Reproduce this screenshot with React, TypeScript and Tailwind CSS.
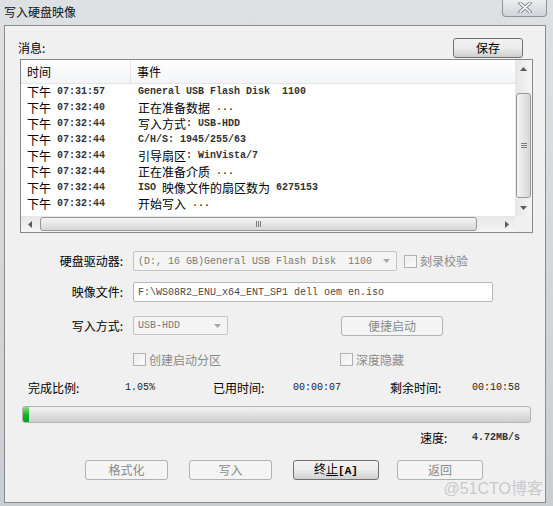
import React from "react"

const isCjk = (ch: string) => /[\u3000-\u9fff\uff00-\uffef]/.test(ch)

// split text into CJK / latin runs so each gets its own font and size
const splitRuns = (s: string) => {
  const out: { cjk: boolean; text: string }[] = []
  for (const ch of s) {
    const c = isCjk(ch)
    const last = out[out.length - 1]
    if (last && last.cjk === c) last.text += ch
    else out.push({ cjk: c, text: ch })
  }
  return out
}

const Mixed: React.FC<{ text: string; bold?: boolean }> = ({ text, bold }) => (
  <>
    {splitRuns(text).map((r, i) =>
      r.cjk ? (
        <span key={i} className="text-[12px] text-black font-['Noto_Sans_CJK_SC',sans-serif]">
          {r.text}
        </span>
      ) : (
        <span
          key={i}
          className={
            bold
              ? "text-[10px] font-bold text-[#333] font-['Liberation_Mono',monospace] whitespace-pre"
              : "text-[10px] font-['Liberation_Mono',monospace] whitespace-pre"
          }
        >
          {r.text}
        </span>
      )
    )}
  </>
)

const rows = [
  ["07:31:57", "General USB Flash Disk  1100"],
  ["07:32:40", "正在准备数据 ..."],
  ["07:32:44", "写入方式: USB-HDD"],
  ["07:32:44", "C/H/S: 1945/255/63"],
  ["07:32:44", "引导扇区: WinVista/7"],
  ["07:32:44", "正在准备介质 ..."],
  ["07:32:44", "ISO 映像文件的扇区数为 6275153"],
  ["07:32:44", "开始写入 ..."],
]

const Arrow: React.FC<{ dir: "up" | "down" | "left" | "right" }> = ({ dir }) => {
  const pts = {
    up: "0,4 3.5,0 7,4",
    down: "0,0 3.5,4 7,0",
    left: "4,0 0,3.5 4,7",
    right: "0,0 4,3.5 0,7",
  }[dir]
  const vertical = dir === "up" || dir === "down"
  return (
    <svg width={vertical ? 7 : 4} height={vertical ? 4 : 7} viewBox={vertical ? "0 0 7 4" : "0 0 4 7"}>
      <polygon points={pts} fill="#5a5a5a" />
    </svg>
  )
}

const Btn: React.FC<{ label: string; enabled?: boolean; className?: string; children?: React.ReactNode }> = ({
  label,
  enabled,
  className,
  children,
}) => (
  <div
    className={
      (enabled
        ? "border border-[#707070] bg-linear-to-b from-[#f2f2f2] via-[#ebebeb] to-[#d0d0d0] text-black "
        : "border border-[#adb2b5] bg-[#f4f4f4] text-[#8a8a8a] ") +
      "rounded-[3px] flex items-center justify-center text-[12px] leading-none font-['Noto_Sans_CJK_SC',sans-serif] " +
      (className ?? "")
    }
  >
    {children ?? label}
  </div>
)

const Check: React.FC<{ label: string }> = ({ label }) => (
  <div className="flex items-center">
    <div className="w-[13px] h-[13px] border border-[#b1b1b1] bg-[#f4f4f4] p-[1px]">
      <div className="w-full h-full bg-linear-to-br from-[#ececec] to-[#fbfbfb]" />
    </div>
    <span className="ml-[3px] text-[12px] leading-none text-[#8a8a8a] font-['Noto_Sans_CJK_SC',sans-serif]">
      {label}
    </span>
  </div>
)

const Label: React.FC<{ text: string }> = ({ text }) => (
  <div className="w-[118px] text-right text-[12px] leading-none text-black font-['Noto_Sans_CJK_SC',sans-serif]">
    {text}
  </div>
)

const Combo: React.FC<{ text: string; className?: string }> = ({ text, className }) => (
  <div
    className={
      "h-full border border-[#c2c5c8] rounded-[2px] bg-[#f4f4f4] flex items-center pl-[4px] pr-[6px] text-[#7a7a7a] " +
      (className ?? "")
    }
  >
    <span className="flex-1 text-[10px] font-['Liberation_Mono',monospace] whitespace-pre overflow-hidden">{text}</span>
    <svg width="7" height="4" viewBox="0 0 7 4">
      <polygon points="0,0 3.5,4 7,0" fill="#a8a8a8" />
    </svg>
  </div>
)

export default function App() {
  return (
    <div className="relative w-[553px] h-[506px] overflow-hidden flex flex-col bg-linear-to-b from-[#dde1e4] to-[#c9ced2] font-['Noto_Sans_CJK_SC',sans-serif]">
      {/* title bar */}
      <div className="h-[25px] flex items-start justify-between">
        <span className="pl-[4px] pt-[5px] text-[12px] leading-[13px] text-[#111]">写入硬盘映像</span>
        <div className="mr-[6px] -mt-[1px] w-[45px] h-[18px] border border-[#8d9399] border-t-0 rounded-b-[4px] bg-linear-to-b from-[#eef0f2] to-[#cfd4d9] flex items-center justify-center">
          <svg width="14" height="11" viewBox="0 0 14 11">
            <path d="M2 1 L12 10 M12 1 L2 10" stroke="#6b7075" strokeWidth="3.4" strokeLinecap="round" />
            <path d="M2 1 L12 10 M12 1 L2 10" stroke="#f4f5f6" strokeWidth="1.8" strokeLinecap="round" />
          </svg>
        </div>
      </div>

      {/* client area */}
      <div className="ml-[4px] w-[542px] h-[478px] border border-[#8b8b8b] bg-[#f0f0f0] flex flex-col">
        <div className="mt-[12px] h-[20px] flex items-center justify-between pl-[13px] pr-[22px]">
          <span className="text-[12px] leading-none text-black">消息:</span>
          <Btn label="保存" enabled className="w-[70px] h-[20px]" />
        </div>

        {/* log list */}
        <div className="mt-[1px] ml-[15px] w-[513px] h-[174px] border border-[#828790] bg-white flex flex-col">
          <div className="flex-1 flex min-h-0">
            <div className="flex-1 flex flex-col">
              <div className="h-[24px] flex bg-linear-to-b from-white to-[#f3f4f6] border-b border-[#e3e5e8]">
                <div className="w-[110px] border-r border-[#e3e5e8] pl-[6px] flex items-center text-[12px] leading-none text-black">
                  时间
                </div>
                <div className="flex-1 pl-[6px] flex items-center text-[12px] leading-none text-black">事件</div>
              </div>
              {rows.map(([t, e], i) => (
                <div key={i} className="h-[16px] flex items-center text-[#1a1a1a]">
                  <div className="w-[110px] pl-[6px] flex items-center leading-none">
                    <Mixed text={"下午 " + t} bold />
                  </div>
                  <div className="flex-1 pl-[7px] flex items-center leading-none">
                    <Mixed text={e} bold />
                  </div>
                </div>
              ))}
            </div>
            {/* vertical scrollbar */}
            <div className="w-[17px] flex flex-col bg-linear-to-r from-[#e6e6e6] to-[#f5f5f5]">
              <div className="h-[17px] flex items-center justify-center">
                <Arrow dir="up" />
              </div>
              <div className="h-[16px]" />
              <div className="h-[105px] mx-[1px] border border-[#989898] rounded-[3px] bg-linear-to-r from-[#f4f4f4] to-[#d7d7d7] flex flex-col items-center justify-center gap-[1px]">
                <div className="w-[6px] h-[1px] bg-[#7c7c7c]" />
                <div className="w-[6px] h-[1px] bg-[#7c7c7c]" />
                <div className="w-[6px] h-[1px] bg-[#7c7c7c]" />
              </div>
              <div className="flex-1" />
              <div className="h-[17px] flex items-center justify-center">
                <Arrow dir="down" />
              </div>
            </div>
          </div>
          {/* horizontal scrollbar */}
          <div className="h-[16px] flex">
            <div className="flex-1 flex bg-linear-to-b from-[#e6e6e6] to-[#f5f5f5]">
              <div className="w-[17px] flex items-center justify-center">
                <Arrow dir="left" />
              </div>
              <div className="w-[2px]" />
              <div className="w-[437px] my-[1px] border border-[#989898] rounded-[3px] bg-linear-to-b from-[#f4f4f4] to-[#d7d7d7] flex items-center justify-center gap-[1px]">
                <div className="w-[1px] h-[6px] bg-[#7c7c7c]" />
                <div className="w-[1px] h-[6px] bg-[#7c7c7c]" />
                <div className="w-[1px] h-[6px] bg-[#7c7c7c]" />
              </div>
              <div className="flex-1" />
              <div className="w-[17px] flex items-center justify-center">
                <Arrow dir="right" />
              </div>
            </div>
            <div className="w-[17px] bg-[#f0f0f0]" />
          </div>
        </div>

        {/* form */}
        <div className="mt-[18px] h-[20px] flex items-center">
          <Label text="硬盘驱动器:" />
          <Combo text="(D:, 16 GB)General USB Flash Disk  1100" className="ml-[10px] w-[264px]" />
          <div className="ml-[7px]">
            <Check label="刻录校验" />
          </div>
        </div>
        <div className="mt-[11px] h-[20px] flex items-center">
          <Label text="映像文件:" />
          <div className="ml-[10px] w-[360px] h-full border border-[#b5b8bc] rounded-[2px] bg-white flex items-center pl-[4px] text-[#4a4a4a] text-[10px] font-['Liberation_Mono',monospace] whitespace-pre">
            F:\WS08R2_ENU_x64_ENT_SP1 dell oem en.iso
          </div>
        </div>
        <div className="mt-[13px] h-[21px] flex items-center">
          <Label text="写入方式:" />
          <Combo text="USB-HDD" className="ml-[10px] w-[95px] !h-[19px]" />
          <Btn label="便捷启动" className="ml-[113px] w-[102px] h-[20px]" />
        </div>
        <div className="mt-[16px] h-[15px] flex items-center pl-[128px]">
          <div className="w-[207px]">
            <Check label="创建启动分区" />
          </div>
          <Check label="深度隐藏" />
        </div>

        {/* progress */}
        <div className="mt-[14px] h-[14px] flex items-center pl-[23px] text-[12px] leading-none text-black">
          <div className="w-[97px]">完成比例:</div>
          <div className="w-[88px] text-[10px] font-['Liberation_Mono',monospace] text-[#222]">1.05%</div>
          <div className="w-[80px]">已用时间:</div>
          <div className="w-[97px] text-[10px] font-['Liberation_Mono',monospace] text-[#222]">00:00:07</div>
          <div className="w-[82px]">剩余时间:</div>
          <div className="text-[10px] font-['Liberation_Mono',monospace] text-[#222]">00:10:58</div>
        </div>
        <div className="mt-[11px] ml-[17px] w-[509px] h-[17px] border border-[#b2b2b2] rounded-[3px] bg-linear-to-b from-[#f3f3f3] via-[#e0e0e0] to-[#cfcfcf] flex overflow-hidden">
          <div className="w-[6px] h-full bg-linear-to-b from-[#7ee07e] via-[#12b82a] to-[#0a9c1e]" />
        </div>
        <div className="mt-[8px] h-[14px] flex items-center pl-[415px] text-[12px] leading-none text-black">
          <div className="w-[52px]">速度:</div>
          <div className="text-[10px] font-bold font-['Liberation_Mono',monospace] text-[#333]">4.72MB/s</div>
        </div>

        {/* buttons */}
        <div className="mt-[15px] h-[20px] flex items-center pl-[80px]">
          <Btn label="格式化" className="w-[83px] h-[20px]" />
          <Btn label="写入" className="ml-[21px] w-[83px] h-[20px]" />
          <Btn label="" enabled className="ml-[21px] w-[86px] h-[20px]">
            <span>
              终<span className="underline">止</span>
              <span className="text-[11px] font-bold font-['Liberation_Mono',monospace]">[A]</span>
            </span>
          </Btn>
          <Btn label="返回" className="ml-[18px] w-[86px] h-[20px]" />
        </div>
      </div>

      {/* watermark */}
      <div className="absolute right-[10px] bottom-[9px] text-[16px] leading-none text-[#c9c9c9] font-['Liberation_Sans','Noto_Sans_CJK_SC',sans-serif]">
        @51CTO博客
      </div>
    </div>
  )
}
